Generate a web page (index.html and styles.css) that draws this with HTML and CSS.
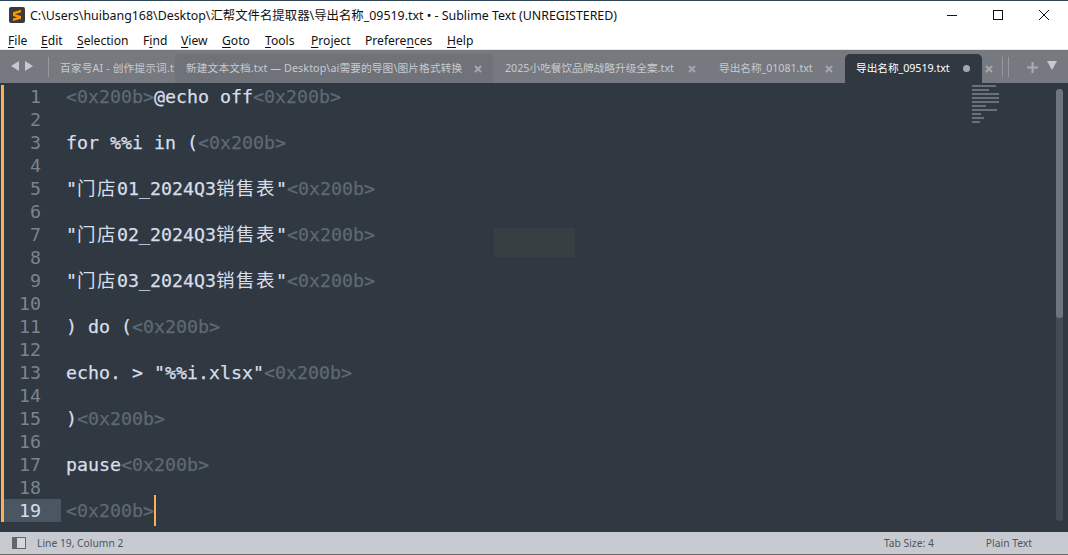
FILE: index.html
```html
<!DOCTYPE html>
<html lang="zh">
<head>
<meta charset="utf-8">
<title>Sublime Text</title>
<link rel="stylesheet" href="styles.css">
</head>
<body>
<div class="window">
  <header class="titlebar">
    <svg class="app-icon" width="16" height="16" viewBox="0 0 16 16"><rect width="16" height="16" rx="2" fill="#3b3b3b"/><path d="M4 5.2 12 2.8v2.5L4 7.7zM4 6.6l8 2.5v2.3L4 8.9zM12 9.2v2.5l-8 2.2v-2.4z" fill="#ff9800"/></svg>
    <span class="title">C:\Users\huibang168\Desktop\汇帮文件名提取器\导出名称_09519.txt • - Sublime Text (UNREGISTERED)</span>
    <div class="win-controls">
      <svg width="12" height="12" viewBox="0 0 12 12"><path d="M1 6.5h10" stroke="#111" fill="none"/></svg>
      <svg width="12" height="12" viewBox="0 0 12 12"><rect x="1.5" y="1.5" width="9" height="9" stroke="#111" fill="none"/></svg>
      <svg width="12" height="12" viewBox="0 0 12 12"><path d="M1 1l10 10M11 1 1 11" stroke="#111" fill="none"/></svg>
    </div>
  </header>
  <nav class="menubar">
    <span class="m-file"><u>F</u>ile</span>
    <span class="m-edit"><u>E</u>dit</span>
    <span class="m-sel"><u>S</u>election</span>
    <span class="m-find">F<u>i</u>nd</span>
    <span class="m-view"><u>V</u>iew</span>
    <span class="m-goto"><u>G</u>oto</span>
    <span class="m-tools"><u>T</u>ools</span>
    <span class="m-proj"><u>P</u>roject</span>
    <span class="m-pref">Prefere<u>n</u>ces</span>
    <span class="m-help"><u>H</u>elp</span>
  </nav>
  <div class="tabstrip">
    <div class="tab-nav">
      <svg width="22" height="10" viewBox="0 0 22 10"><path d="M8 0v10L0 5zM14 0v10l8-5z" fill="#c6c9cd"/></svg>
    </div>
    <div class="tab t1"><span class="tab-label">百家号AI - 创作提示词.t</span></div>
    <div class="tab t2"><span class="tab-label">新建文本文档.txt — Desktop\ai需要的导图\图片格式转换</span><svg class="tab-x" width="8" height="8" viewBox="0 0 8 8"><path d="M1 1l6 6M7 1 1 7"/></svg></div>
    <div class="tab t3"><span class="tab-label">2025小吃餐饮品牌战略升级全案.txt</span><svg class="tab-x" width="8" height="8" viewBox="0 0 8 8"><path d="M1 1l6 6M7 1 1 7"/></svg></div>
    <div class="tab t4"><span class="tab-label">导出名称_01081.txt</span><svg class="tab-x" width="8" height="8" viewBox="0 0 8 8"><path d="M1 1l6 6M7 1 1 7"/></svg></div>
    <div class="tab t5"><span class="tab-label">导出名称_09519.txt</span><span class="tab-dot"></span></div>
    <svg class="tab-x after-active" width="8" height="8" viewBox="0 0 8 8"><path d="M1 1l6 6M7 1 1 7"/></svg>
    <div class="strip-tools">
      <span class="strip-sep"></span><span class="strip-sep"></span>
      <svg class="strip-plus" width="11" height="11" viewBox="0 0 11 11"><path d="M5.5 0v11M0 5.5h11" stroke="#a9acb0" stroke-width="2" fill="none"/></svg>
      <svg class="strip-menu" width="10" height="9" viewBox="0 0 10 9"><path d="M0 0h10L5 9z" fill="#c6c9cd"/></svg>
    </div>
  </div>
  <main class="editor">
    <div class="row"><span class="num">1</span><span class="code"><i>&lt;0x200b&gt;</i>@echo off<i>&lt;0x200b&gt;</i></span></div>
    <div class="row"><span class="num">2</span></div>
    <div class="row"><span class="num">3</span><span class="code">for %%i in (<i>&lt;0x200b&gt;</i></span></div>
    <div class="row"><span class="num">4</span></div>
    <div class="row"><span class="num">5</span><span class="code">"<b>门店</b>01_2024Q3<b>销售表</b>"<i>&lt;0x200b&gt;</i></span></div>
    <div class="row"><span class="num">6</span></div>
    <div class="row"><span class="num">7</span><span class="code">"<b>门店</b>02_2024Q3<b>销售表</b>"<i>&lt;0x200b&gt;</i></span></div>
    <div class="row"><span class="num">8</span></div>
    <div class="row"><span class="num">9</span><span class="code">"<b>门店</b>03_2024Q3<b>销售表</b>"<i>&lt;0x200b&gt;</i></span></div>
    <div class="row"><span class="num">10</span></div>
    <div class="row"><span class="num">11</span><span class="code">) do (<i>&lt;0x200b&gt;</i></span></div>
    <div class="row"><span class="num">12</span></div>
    <div class="row"><span class="num">13</span><span class="code">echo. &gt; "%%i.xlsx"<i>&lt;0x200b&gt;</i></span></div>
    <div class="row"><span class="num">14</span></div>
    <div class="row"><span class="num">15</span><span class="code">)<i>&lt;0x200b&gt;</i></span></div>
    <div class="row"><span class="num">16</span></div>
    <div class="row"><span class="num">17</span><span class="code">pause<i>&lt;0x200b&gt;</i></span></div>
    <div class="row"><span class="num">18</span></div>
    <div class="row current"><span class="num">19</span><span class="code"><i>&lt;0x200b&gt;</i><span class="caret"></span></span></div>
    <div class="ghost"></div>
    <div class="minimap">
      <span class="mm w24"></span><span class="mm w17"></span><span class="mm w27"></span><span class="mm w27"></span><span class="mm w27"></span><span class="mm w14"></span><span class="mm w25"></span><span class="mm w9"></span><span class="mm w12"></span><span class="mm w8"></span>
    </div>
    <div class="scrollbar"><div class="puck"></div></div>
  </main>
  <footer class="statusbar">
    <svg class="panel-icon" width="14" height="12" viewBox="0 0 14 12"><rect x=".5" y=".5" width="13" height="11" fill="#d4d6db" stroke="#666"/><rect width="5" height="12" fill="#666"/></svg>
    <span class="status-pos">Line 19, Column 2</span>
    <span class="status-tab">Tab Size: 4</span>
    <span class="status-syntax">Plain Text</span>
  </footer>
</div>
</body>
</html>
```
FILE: styles.css
```css
* { box-sizing: border-box; }
html, body { margin: 0; padding: 0; background: #fff; overflow: hidden; }
.window {
  width: 1068px; height: 555px; display: flex; flex-direction: column;
  font-family: "Noto Sans", "Noto Sans CJK SC", sans-serif;
  border-top: 1px solid #30475a; border-bottom: 1px solid #6b6b6b;
}
.titlebar { height: 28px; display: flex; align-items: center; padding-left: 9px; background: #fff; flex: none; }
.app-icon { flex: none; margin-top: -1px; }
.title { margin-left: 5px; font-size: 12.4px; color: #111; white-space: nowrap; }
.win-controls { margin-left: auto; display: flex; gap: 34px; padding-right: 18px; }
.menubar { height: 21px; display: flex; align-items: center; background: #fff; font-size: 12.1px; color: #111; flex: none; padding: 2px 0 0 8px; border-bottom: 1px solid #e8e8e8; }
.menubar span { display: block; }
.menubar u { text-underline-offset: 2px; }
.m-file { width: 33px; } .m-edit { width: 36px; } .m-sel { width: 66px; } .m-find { width: 38px; }
.m-view { width: 41px; } .m-goto { width: 43px; } .m-tools { width: 46px; } .m-proj { width: 54px; }
.m-pref { width: 82px; }
.tabstrip { height: 33px; display: flex; align-items: flex-end; background: #767a80; flex: none; font-size: 10.7px; color: #c7cace; }
.tab-nav { width: 49px; height: 20px; padding: 4px 0 0 11px; border-right: 1px solid #94979b; margin-bottom: 6px; flex: none; }
.tab-nav svg { display: block; }
.tab { height: 29px; display: flex; align-items: center; flex: none; position: relative; white-space: nowrap; padding-bottom: 2px; }
.tab-label { display: block; }
.t1 { width: 126px; padding-left: 11px; letter-spacing: 0.15px; }
.t2 { width: 318px; padding-left: 11px; background: #6f7379; border-radius: 5px 5px 0 0; letter-spacing: 0.11px; }
.t3 { width: 214px; padding-left: 12px; }
.t4 { width: 138px; padding-left: 12px; letter-spacing: -0.05px; }
.t5 { width: 137px; padding-left: 11px; background: #303841; color: #fff; border-radius: 5px 5px 0 0; letter-spacing: -0.05px; }
.tab-x { stroke: #a4a7ab; stroke-width: 2; fill: none; position: absolute; right: 11px; top: 11px; }
.t4 .tab-x { right: 12px; }
.tab-dot { width: 7px; height: 7px; border-radius: 50%; background: #a4a7ab; position: absolute; right: 12px; top: 11px; }
.tab-x.after-active { position: static; align-self: center; margin: 4px 0 0 3px; flex: none; }
.strip-tools { display: flex; align-items: center; height: 20px; margin-left: 9px; margin-bottom: 6px; }
.strip-sep { width: 1px; height: 20px; background: #94979b; margin-right: 5px; }
.strip-plus { margin-left: 13px; }
.strip-menu { margin-left: 9px; margin-top: -3px; }
.editor { flex: 1; background: #303841; position: relative; padding-top: 2px; font-family: "DejaVu Sans Mono", "Noto Sans CJK SC", monospace; font-size: 18.27px; color: #d8dee9; overflow: hidden; }
.row { height: 23px; line-height: 23px; display: flex; border-left: 3px solid #f9ae58; margin-left: 1px; white-space: pre; }
.num { width: 57px; padding-right: 20px; text-align: right; color: #7b848e; flex: none; }
.code { margin-left: 5px; -webkit-text-stroke: 0.25px currentColor; }
.code i { font-style: normal; color: #5f6973; }
.code b { font-weight: normal; font-size: 18.5px; letter-spacing: 1.5px; line-height: 0; font-family: "Noto Sans CJK SC", sans-serif; -webkit-text-stroke: 0; }
.current .num { background: #4a5662; color: #d8dee9; }
.caret { position: absolute; width: 2px; height: 31px; margin-top: -4px; background: #f9ae58; }
.ghost { position: absolute; left: 494px; top: 145px; width: 81px; height: 29px; background: #363f42; }
.minimap { position: absolute; left: 972px; top: 2px; display: flex; flex-direction: column; gap: 2px; }
.mm { display: block; height: 2px; background: #687079; }
.w24 { width: 24px; } .w17 { width: 17px; } .w27 { width: 27px; } .w14 { width: 14px; } .w25 { width: 25px; } .w9 { width: 9px; } .w12 { width: 12px; } .w8 { width: 8px; }
.scrollbar { position: absolute; left: 1056px; top: 6px; width: 7px; height: 432px; background: #434b55; border-radius: 3px; overflow: hidden; }
.puck { height: 229px; background: #6f757c; border-radius: 3px; }
.statusbar { height: 22px; display: flex; align-items: center; background: #c7cad1; flex: none; font-size: 10.3px; color: #50555c; padding-left: 12px; position: relative; }
.panel-icon { flex: none; }
.status-pos { margin-left: 11px; }
.status-tab { margin-left: auto; }
.status-syntax { margin-left: 52px; margin-right: 36px; }
```
